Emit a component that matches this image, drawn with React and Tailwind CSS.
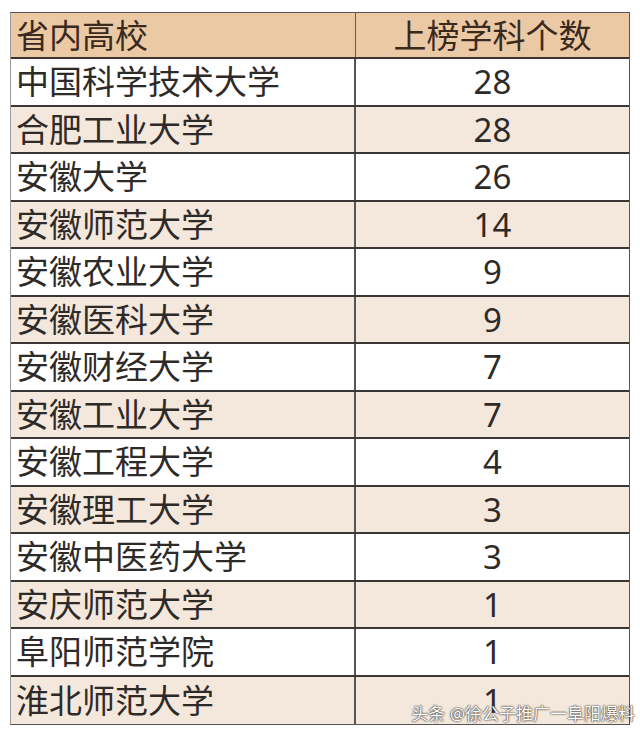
import React from "react";

const rows = [
  ["中国科学技术大学", "28"],
  ["合肥工业大学", "28"],
  ["安徽大学", "26"],
  ["安徽师范大学", "14"],
  ["安徽农业大学", "9"],
  ["安徽医科大学", "9"],
  ["安徽财经大学", "7"],
  ["安徽工业大学", "7"],
  ["安徽工程大学", "4"],
  ["安徽理工大学", "3"],
  ["安徽中医药大学", "3"],
  ["安庆师范大学", "1"],
  ["阜阳师范学院", "1"],
  ["淮北师范大学", "1"],
];

export default function App() {
  return (
    <div className="w-[640px] h-[739px] bg-white pt-[12px] pl-[10px] font-['Noto_Sans','Noto_Sans_CJK_SC',sans-serif]">
      <div className="relative w-[620px] border border-[#555] border-l-[#999]">
        <div className="flex h-[46px] bg-[#ecc9a5] text-[33px] leading-none text-[#3a2a1e] border-b-2 border-[#3d3530]">
          <div className="w-[345px] flex items-center pl-[5px] border-r border-[#6b5a4a]">省内高校</div>
          <div className="flex-1 flex items-center justify-center">上榜学科个数</div>
        </div>
        {rows.map(([name, count], i) => (
          <div
            key={name}
            className={
              "flex h-[47.5px] text-[33px] leading-none text-[#2e2a27] border-[#3a3633] " +
              (i % 2 === 0 ? "bg-white " : "bg-[#f4e7dc] ") +
              (i < rows.length - 1 ? "border-b-2" : "")
            }
          >
            <div className="w-[345px] flex items-center pl-[5px] border-r-2 border-[#555]">{name}</div>
            <div className="flex-1 flex items-center justify-center">{count}</div>
          </div>
        ))}
        <div className="absolute right-[-6px] bottom-[2px] text-[17px] leading-none text-white [text-shadow:0_0_2px_#222,0_0_1px_#222]">
          头条 @徐公子推广一阜阳爆料
        </div>
      </div>
    </div>
  );
}
